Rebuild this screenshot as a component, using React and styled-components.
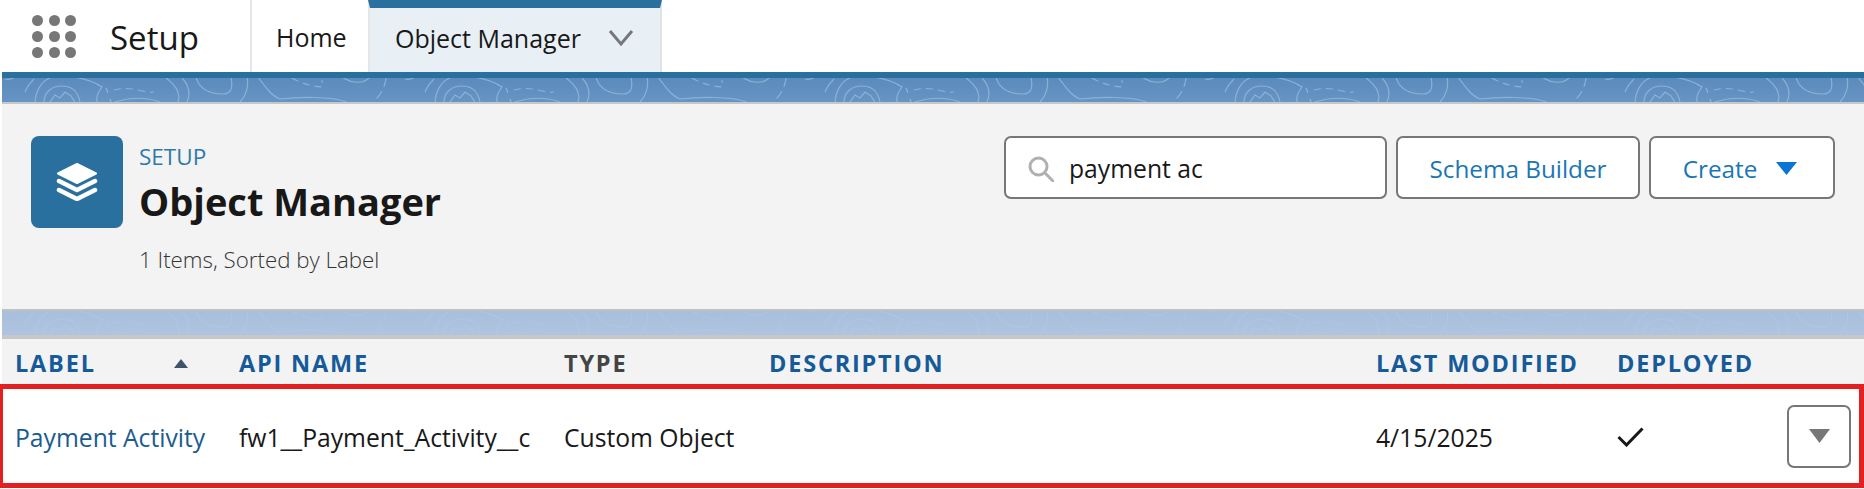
import React from "react";
import styled, { createGlobalStyle } from "styled-components";

const Global = createGlobalStyle`
  html, body { margin: 0; padding: 0; background: #fff; }
  body { font-family: "Open Sans", "Noto Sans", "Liberation Sans", sans-serif; color: #181818; }
  * { box-sizing: border-box; }
`;

const Page = styled.div`
  width: 1864px;
  height: 489px;
  display: flex;
  flex-direction: column;
  overflow: hidden;
  background: #fff;
`;

const Nav = styled.nav`
  height: 78px;
  margin-left: 2px;
  flex: none;
  display: flex;
  align-items: stretch;
  background: #fff;
  border-bottom: 6px solid #2a709f;
`;

const Launcher = styled.div`
  width: 44px;
  margin: 15px 0 0 30px;
  height: 43px;
  display: grid;
  grid-template-columns: repeat(3, 11px);
  grid-auto-rows: 11px;
  justify-content: space-between;
  align-content: space-between;
`;

const Dot = styled.span`
  border-radius: 50%;
  background: #777;
`;

const AppName = styled.div`
  width: 174px;
  padding: 14px 0 0 34px;
  font-size: 33px;
  line-height: 48px;
  font-weight: 400;
`;

const Tab = styled.div`
  width: ${p => p.$w}px;
  display: flex;
  align-items: center;
  padding-left: ${p => p.$pad}px;
  font-size: 25px;
  border-left: 2px solid #e4e6e8;
  background: ${p => (p.$active ? "#e8f0f5" : "#fff")};
  border-top: ${p => (p.$active ? "8px solid #2a709f" : "0")};
  border-right: ${p => (p.$active ? "2px solid #dfe3e6" : "0")};
  padding-bottom: ${p => (p.$active ? "5px" : "0")};
  padding-top: ${p => (p.$active ? "0" : "2px")};
`;

const Chevron = styled.svg`
  width: 26px;
  height: 18px;
  margin-left: 27px;
  fill: none;
  stroke: #777;
  stroke-width: 3;
`;

const BandWrap = styled.div`
  height: ${p => p.$h}px;
  margin-left: 2px;
  flex: none;
  background: ${p => p.$bg};
  border-bottom: ${p => p.$edge}px solid #c6c7c9;
  overflow: hidden;
`;

const BandArt = styled.svg`
  display: block;
  width: 100%;
  height: 100%;
`;

const Panel = styled.section`
  height: 207px;
  flex: none;
  margin-left: 2px;
  padding: 32px 29px 0;
  display: flex;
  justify-content: space-between;
  align-items: flex-start;
  background: #f3f3f3;
  border-bottom: 2px solid #c0c1c4;
`;

const Heading = styled.div`
  display: flex;
  gap: 16px;
`;

const IconTile = styled.div`
  width: 92px;
  height: 92px;
  border-radius: 8px;
  background: #2a709f;
  display: flex;
  align-items: center;
  justify-content: center;
`;

const TitleBlock = styled.div`
  display: flex;
  flex-direction: column;
`;

const Eyebrow = styled.div`
  font-size: 22.5px;
  line-height: 42px;
  color: #2f79a8;
`;

const Title = styled.h1`
  margin: -2px 0 0;
  font-size: 38px;
  line-height: 50px;
  font-weight: 700;
  color: #181818;
`;

const Meta = styled.div`
  margin-top: 17px;
  font-size: 22.3px;
  line-height: 34px;
  font-weight: 300;
  color: #333;
`;

const Actions = styled.div`
  display: flex;
  gap: 9px;
`;

const Field = styled.div`
  width: 383px;
  height: 63px;
  display: flex;
  align-items: center;
  gap: 15px;
  padding: 2px 0 0 22px;
  background: #fff;
  border: 2px solid #777;
  border-radius: 7px;
  font-size: 24.7px;
  color: #181818;
`;

const Button = styled.div`
  width: ${p => p.$w}px;
  height: 63px;
  display: flex;
  align-items: center;
  justify-content: center;
  gap: 19px;
  padding: 2px ${p => p.$shift || 0}px 0 0;
  background: #fff;
  border: 2px solid #777;
  border-radius: 7px;
  font-size: 24.3px;
  color: #1a76b4;
`;

const Tri = styled.svg`
  display: block;
  flex: none;
  width: ${p => p.$w}px;
  height: ${p => p.$h}px;
  fill: ${p => p.$c};
`;

const cols = "224px 325px 205px 607px 241px 169px 1fr";

const HeadRow = styled.div`
  height: 45px;
  flex: none;
  margin-left: 2px;
  padding: 3px 0 0 13px;
  display: grid;
  grid-template-columns: ${cols};
  align-items: center;
  background: #f3f3f3;
`;

const HeadCell = styled.div`
  display: flex;
  justify-content: space-between;
  padding-right: 51px;
  align-items: center;
  font-size: 23.5px;
  font-weight: 700;
  letter-spacing: 1.8px;
  white-space: nowrap;
  color: ${p => (p.$dark ? "#444" : "#165a9a")};
`;

const Row = styled.div`
  height: 104px;
  flex: none;
  padding-left: 12px;
  padding-right: 8px;
  display: grid;
  grid-template-columns: ${cols};
  align-items: center;
  border: solid #e32020;
  border-width: 5px 5px 5px 3px;
  font-size: 24.7px;
  background: #fff;
`;

const Cell = styled.div`
  padding-top: 2px;
  white-space: nowrap;
  color: ${p => (p.$link ? "#1b5c8e" : "#181818")};
`;

const RowAction = styled.div`
  justify-self: end;
  width: 64px;
  height: 63px;
  display: flex;
  align-items: center;
  justify-content: center;
  border: 2px solid #777;
  border-radius: 7px;
`;

const Art = ({ stroke, opacity }) => {
  const id = `topo-${stroke.replace("#", "")}`;
  return (
    <BandArt aria-hidden="true">
      <defs>
        <pattern id={id} width="400" height="24" patternUnits="userSpaceOnUse">
          <g fill="none" stroke={stroke} strokeOpacity={opacity} strokeWidth="1.2">
            <path d="M3 1 C7 2 10 1 13 -1" />
            <path d="M32 1 C28 5 25 9 23 14" />
            <path d="M33 24 C34 12 40 2 50 -1" />
            <path d="M72 -1 C84 1 93 4 100 9 C96 14 94 19 95 24" />
            <path d="M42 24 C42 14 50 8 60 8 C70 8 76 14 78 24" />
            <path d="M48 24 L53 17 L58 20 L63 14 L69 18 L73 24" />
            <path d="M104 10 L106 15 M108 21 L109 24" />
            <path d="M112 12 Q124 9 136 12 T152 14" strokeDasharray="7 5" />
            <path d="M113 24 C128 19 145 19 158 24" />
            <path d="M163 -1 C175 8 179 16 176 24" />
            <path d="M180 0 C188 8 188 18 185 24" />
            <path d="M194 -1 C197 10 206 16 221 16 C232 16 230 5 229 -1" />
            <path d="M245 -1 C247 8 244 18 238 24" />
            <path d="M256 -1 C264 10 270 18 278 21 C296 19 330 18 344 24" />
            <path d="M290 0 Q304 8 320 9 Q320 8 320 2" strokeDasharray="7 5" />
            <path d="M340 -1 C350 6 362 6 368 -1" />
            <path d="M384 0 C383 8 380 16 372 23" strokeDasharray="9 5" />
          </g>
        </pattern>
      </defs>
      <rect width="100%" height="100%" fill={`url(#${id})`} />
    </BandArt>
  );
};

export default function App() {
  return (
    <Page>
      <Global />
      <Nav>
        <Launcher>
          {Array.from({ length: 9 }).map((_, i) => (
            <Dot key={i} />
          ))}
        </Launcher>
        <AppName>Setup</AppName>
        <Tab $w={118} $pad={24}>Home</Tab>
        <Tab $w={294} $pad={25} $active>
          Object Manager
          <Chevron viewBox="0 0 26 18">
            <path d="M2 2 L13 15 L24 2" />
          </Chevron>
        </Tab>
      </Nav>

      <BandWrap $h={26} $edge={2} $bg="linear-gradient(#5b8bbc,#6694c4)">
        <Art stroke="#a9c6e2" opacity="0.6" />
      </BandWrap>

      <Panel>
        <Heading>
          <IconTile>
            <svg width="42" height="38" viewBox="0 0 42 38" aria-hidden="true">
              <path d="M21 1 L40 10.5 L21 20 L2 10.5 Z" fill="#fff" stroke="#fff" strokeWidth="2" strokeLinejoin="round" />
              <path d="M3 18 L21 27 L39 18" fill="none" stroke="#fff" strokeWidth="4.5" strokeLinecap="round" strokeLinejoin="round" />
              <path d="M3 27 L21 36 L39 27" fill="none" stroke="#fff" strokeWidth="4.5" strokeLinecap="round" strokeLinejoin="round" />
            </svg>
          </IconTile>
          <TitleBlock>
            <Eyebrow>SETUP</Eyebrow>
            <Title>Object Manager</Title>
            <Meta>1 Items, Sorted by Label</Meta>
          </TitleBlock>
        </Heading>
        <Actions>
          <Field>
            <svg width="26" height="26" viewBox="0 0 26 26" fill="none" stroke="#b0b0b0" strokeWidth="3" aria-hidden="true">
              <circle cx="10.5" cy="10.5" r="8.5" />
              <path d="M17 17 L25 25" strokeLinecap="round" />
            </svg>
            payment ac
          </Field>
          <Button $w={244}>Schema Builder</Button>
          <Button $w={186} $shift={4}>
            Create
            <Tri $w={21} $h={13} $c="#0a75d2" viewBox="0 0 21 13">
              <path d="M0 0 H21 L10.5 13 Z" />
            </Tri>
          </Button>
        </Actions>
      </Panel>

      <BandWrap $h={28} $edge={4} $bg="linear-gradient(#a8bfdc,#aec4e0)">
        <Art stroke="#c3d4ea" opacity="0.2" />
      </BandWrap>

      <HeadRow>
        <HeadCell>
          LABEL
          <Tri $w={14} $h={9} $c="#3f5468" viewBox="0 0 14 9">
            <path d="M7 0 L14 9 H0 Z" />
          </Tri>
        </HeadCell>
        <HeadCell>API NAME</HeadCell>
        <HeadCell $dark>TYPE</HeadCell>
        <HeadCell>DESCRIPTION</HeadCell>
        <HeadCell>LAST MODIFIED</HeadCell>
        <HeadCell>DEPLOYED</HeadCell>
      </HeadRow>

      <Row>
        <Cell $link>Payment Activity</Cell>
        <Cell>fw1__Payment_Activity__c</Cell>
        <Cell>Custom Object</Cell>
        <Cell />
        <Cell>4/15/2025</Cell>
        <Cell>
          <svg width="27" height="20" viewBox="0 0 27 20" fill="none" stroke="#181818" strokeWidth="3" aria-hidden="true">
            <path d="M1.5 10 L9.5 18 L25.5 1.5" />
          </svg>
        </Cell>
        <RowAction>
          <Tri $w={21} $h={14} $c="#777" viewBox="0 0 21 14">
            <path d="M0 0 H21 L10.5 14 Z" />
          </Tri>
        </RowAction>
      </Row>
    </Page>
  );
}
